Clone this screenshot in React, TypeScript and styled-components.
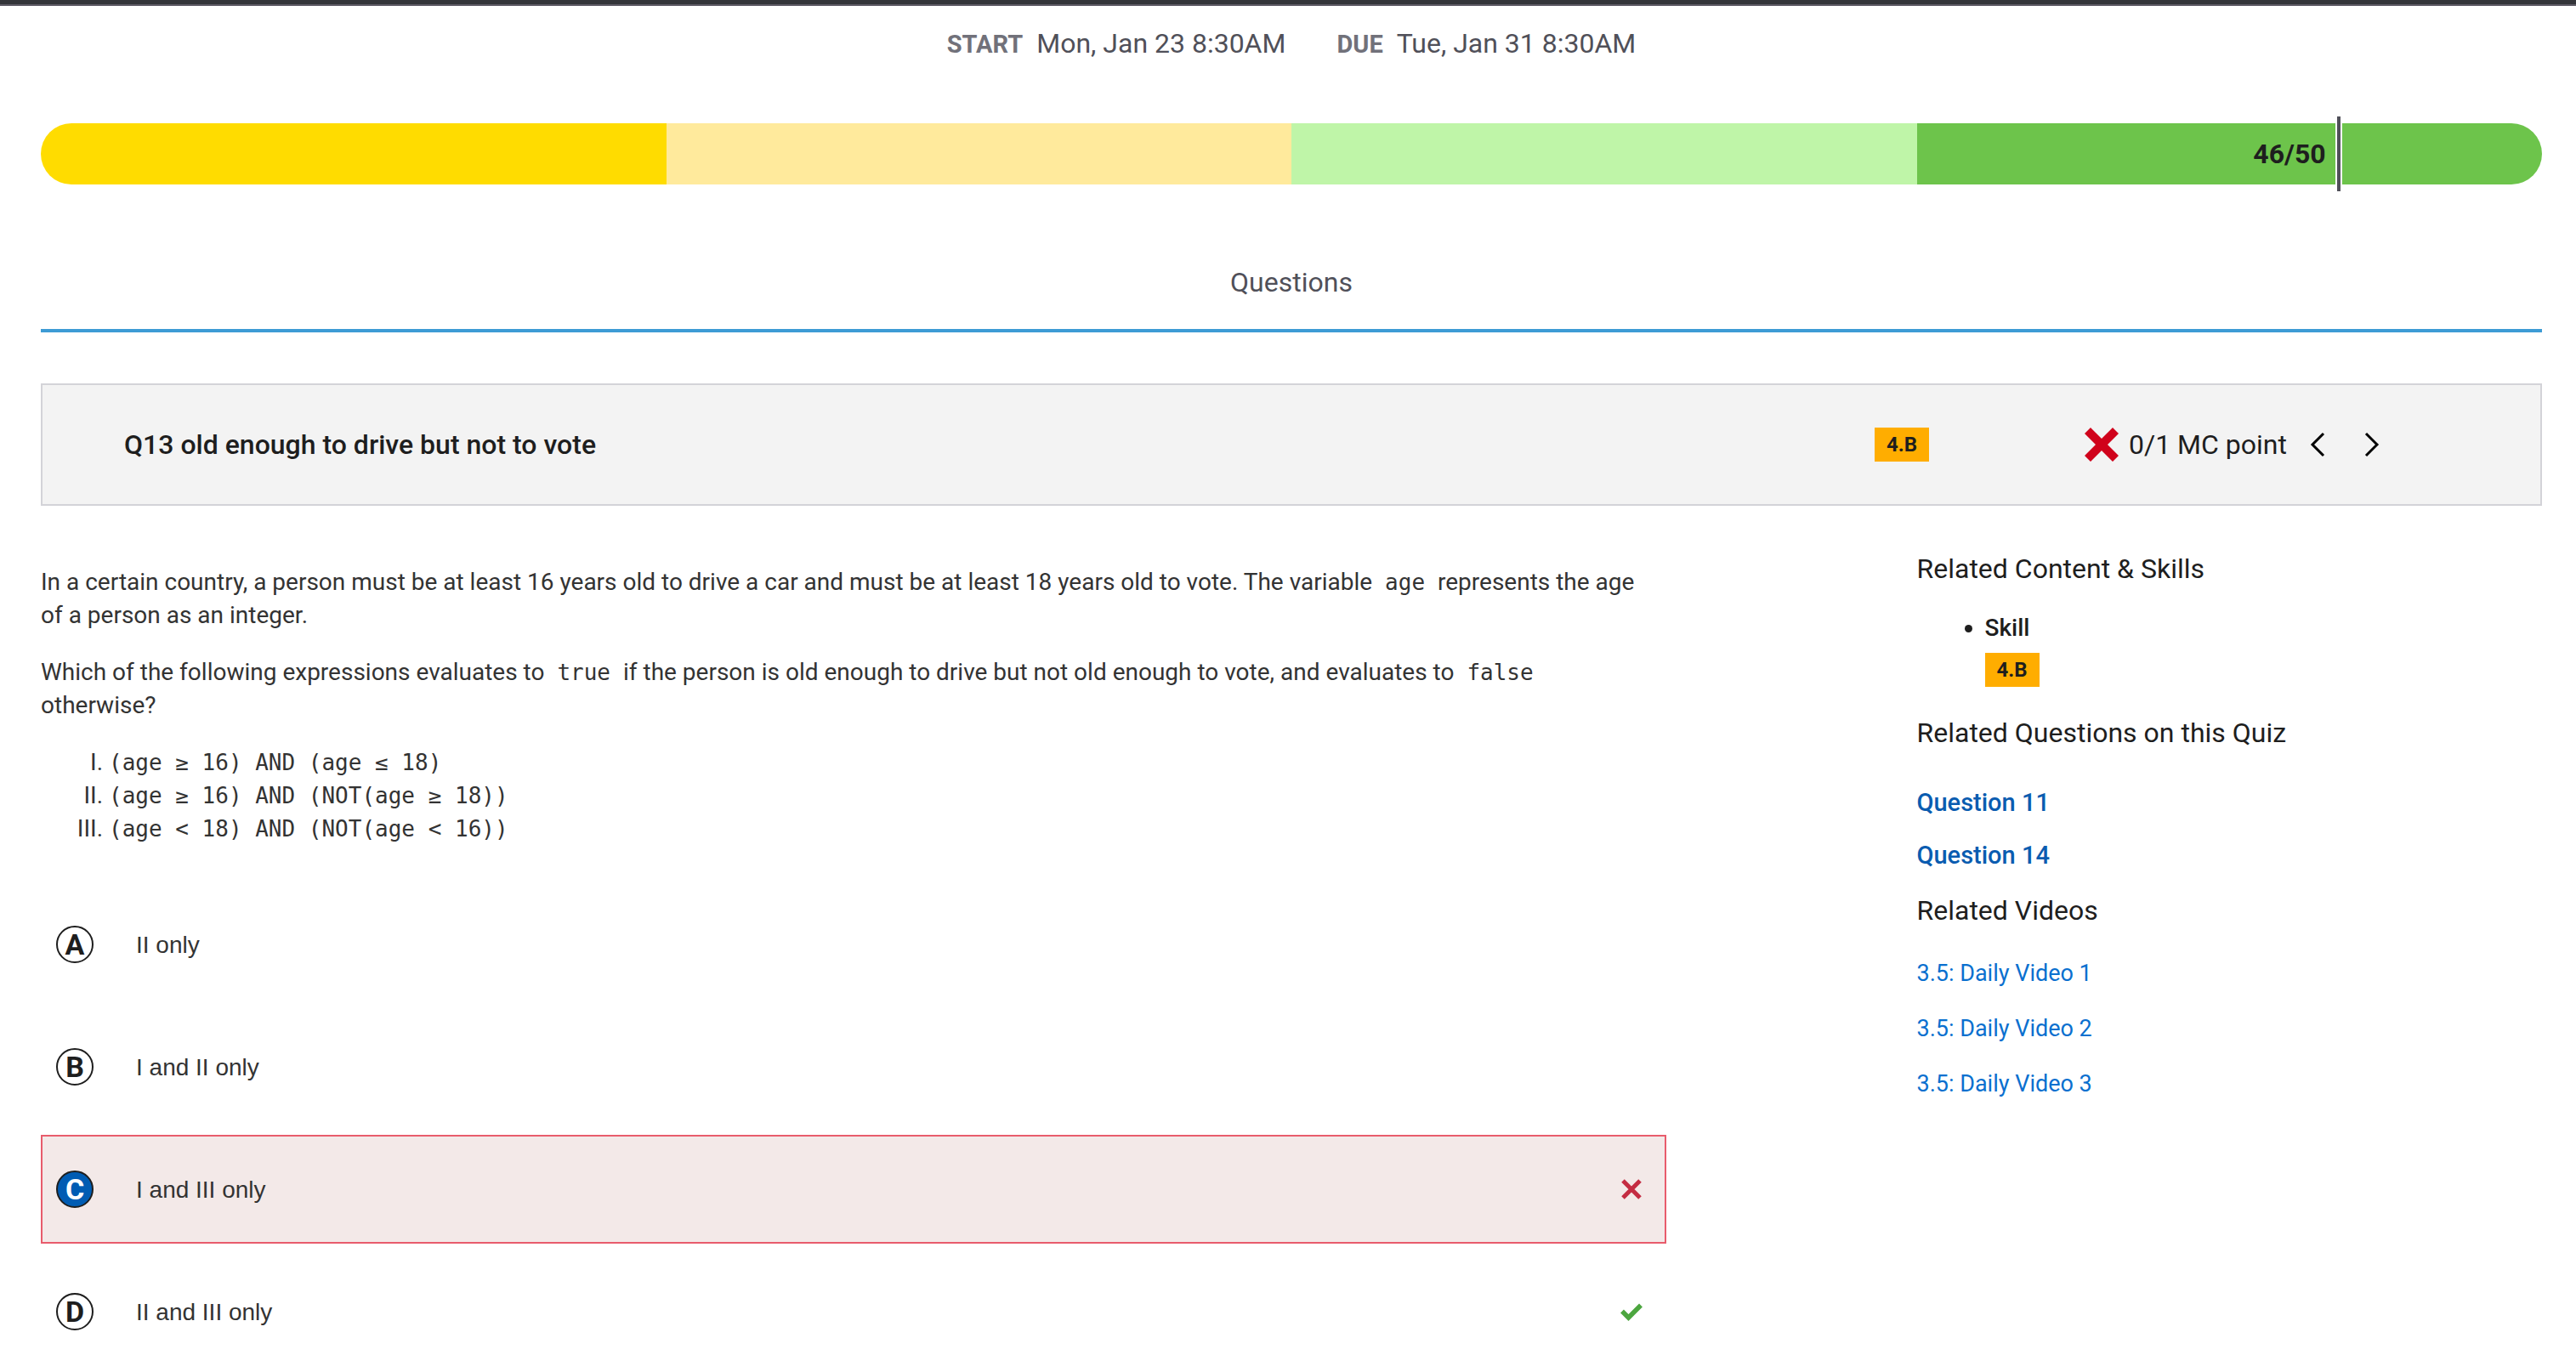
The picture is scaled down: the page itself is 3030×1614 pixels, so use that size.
import React from 'react';
import styled, { createGlobalStyle } from 'styled-components';

const GlobalStyle = createGlobalStyle`
  *, *::before, *::after { box-sizing: border-box; }
  body {
    margin: 0;
    background: #fff;
    color: #1e1e1e;
    font-family: Roboto, "Liberation Sans", sans-serif;
    font-size: 28px;
    line-height: 39px;
  }
`;

const TopStrip = styled.div`
  height: 7px;
  background: #34353a;
  border-bottom: 2px solid #5f5b66;
`;

const Page = styled.main`
  padding: 0 40px 0 48px;
`;

const Dates = styled.dl`
  display: flex;
  justify-content: center;
  gap: 60px;
  margin: 0;
  padding: 24px 0 0;
  font-size: 32px;
  line-height: 40px;
  color: #505059;
`;

const DateItem = styled.div`
  display: flex;
  align-items: baseline;
  gap: 16px;
`;

const DateLabel = styled.dt`
  font-size: 29px;
  font-weight: 700;
  color: #71717a;
`;

const DateValue = styled.dd`
  margin: 0;
`;

const ScoreBar = styled.div`
  position: relative;
  display: flex;
  height: 72px;
  margin-top: 73px;
`;

const Band = styled.div<{ $color: string }>`
  flex: 1;
  background: ${(p) => p.$color};
  &:first-child { border-radius: 36px 0 0 36px; }
  &:nth-child(4) { border-radius: 0 36px 36px 0; }
`;

const ScoreMarker = styled.div`
  position: absolute;
  top: -8px;
  bottom: -8px;
  left: 0;
  display: flex;
  align-items: center;
  justify-content: flex-end;
  gap: 11px;
  font-size: 32px;
  font-weight: 700;
`;

const MarkerLine = styled.span`
  width: 8px;
  height: 100%;
  background: #505059;
  border: solid #fff;
  border-width: 0 2px;
`;

const Tab = styled.h2`
  margin: 95px 0 0;
  padding-bottom: 35px;
  border-bottom: 4px solid #3d9bd5;
  color: #505059;
  font-size: 32px;
  font-weight: 400;
  line-height: 40px;
  text-align: center;
`;

const QuestionHeader = styled.header`
  display: grid;
  grid-template-columns: minmax(0, 1fr) 247px 536px;
  align-items: center;
  height: 144px;
  margin-top: 60px;
  padding-left: 96px;
  background: #f3f3f3;
  border: 2px solid #d3d3d8;
`;

const QuestionTitle = styled.h1`
  margin: 0;
  font-size: 32px;
  font-weight: 500;
  line-height: 40px;
`;

const Badge = styled.span`
  display: block;
  width: 64px;
  background: #ffad00;
  font-size: 24px;
  font-weight: 700;
  line-height: 40px;
  text-align: center;
`;

const Points = styled.div`
  display: flex;
  align-items: center;
  font-size: 32px;
  line-height: 40px;
`;

const PointsText = styled.span`
  margin: 0 12px;
`;

const NavButton = styled.button`
  display: flex;
  align-items: center;
  justify-content: center;
  width: 48px;
  height: 48px;
  margin-right: 16px;
  padding: 0;
  border: 0;
  background: none;
  color: #000;
`;

const Columns = styled.div`
  display: grid;
  grid-template-columns: 65fr 10fr 25fr;
`;

const QuestionBody = styled.section`
  color: #333;
`;

const Stimulus = styled.div`
  padding: 70px 32px 0 0;
`;

const Paragraph = styled.p`
  margin: 0 0 28px;
`;

const Code = styled.code`
  font-family: "DejaVu Sans Mono", "Liberation Mono", monospace;
  font-size: 26px;
  line-height: 26px;
`;

const InlineCode = styled(Code)`
  padding: 0 8px;
`;

const Statements = styled.ol`
  margin: 0;
  padding-left: 80px;
  list-style: upper-roman;
`;

const Choices = styled.ul`
  display: grid;
  gap: 16px;
  margin: 0;
  padding: 53px 0 0;
  list-style: none;
`;

const Choice = styled.li<{ $wrong?: boolean }>`
  display: flex;
  align-items: center;
  height: 128px;
  padding: 0 26px 0 16px;
  border: 2px solid ${(p) => (p.$wrong ? '#e85c6c' : 'transparent')};
  background: ${(p) => (p.$wrong ? '#f3e9e8' : 'transparent')};
`;

const Letter = styled.span<{ $selected?: boolean }>`
  width: 44px;
  height: 44px;
  border: 2px solid #1e1e1e;
  border-radius: 50%;
  background: ${(p) => (p.$selected ? '#005cb3' : '#fff')};
  color: ${(p) => (p.$selected ? '#fff' : '#1e1e1e')};
  font-size: 34px;
  font-weight: 700;
  line-height: 40px;
  text-align: center;
`;

const ChoiceText = styled.span`
  flex: 1;
  margin-left: 50px;
  font-family: "Liberation Sans", Arial, sans-serif;
`;

const Related = styled.aside`
  grid-column: 3;
  padding-top: 54px;
`;

const RelatedHeading = styled.h3`
  margin: 0;
  font-size: 32px;
  font-weight: 400;
  line-height: 40px;
`;

const SkillList = styled.ul`
  margin: 0;
  padding: 30px 0 34px 80px;
`;

const Skill = styled.li`
  font-weight: 500;
  & > ${Badge} { margin-top: 10px; }
`;

const LinkList = styled.ul<{ $gap: number }>`
  display: grid;
  justify-items: start;
  gap: ${(p) => p.$gap}px;
  margin: 0;
  padding: 0;
  list-style: none;
`;

const QuestionLinks = styled(LinkList)`
  padding: 43px 0 25px;
`;

const VideoLinks = styled(LinkList)`
  padding-top: 34px;
`;

const QuestionLink = styled.a`
  color: #0a5cb0;
  font-size: 29px;
  font-weight: 500;
  text-decoration: none;
`;

const VideoLink = styled.a`
  color: #0a70cf;
  font-size: 27px;
  text-decoration: none;
`;

const BigCross = () => (
  <svg width="40" height="40" viewBox="0 0 40 40" aria-hidden="true">
    <path d="M7 0 20 13 33 0 40 7 27 20 40 33 33 40 20 27 7 40 0 33 13 20 0 7Z" fill="#d0021b" />
  </svg>
);

const Chevron = ({ left }: { left?: boolean }) => (
  <svg width="20" height="32" viewBox="0 0 20 32" fill="none" stroke="currentColor" strokeWidth="3" aria-hidden="true">
    <path d={left ? 'M17 3 4 16 17 29' : 'M3 3 16 16 3 29'} />
  </svg>
);

const WrongMark = () => (
  <svg width="26" height="26" viewBox="0 0 26 26" role="img" aria-label="Incorrect">
    <path d="M3 3 23 23M23 3 3 23" stroke="#c42c42" strokeWidth="5" fill="none" />
  </svg>
);

const RightMark = () => (
  <svg width="26" height="26" viewBox="0 0 26 26" role="img" aria-label="Correct">
    <path d="M2 12.5 9.5 20 24 5.5" stroke="#4ca63f" strokeWidth="5.5" fill="none" />
  </svg>
);

const bands = ['#ffdc00', '#ffea9c', '#bff5a8', '#6dc44b'];
const score = 46;
const total = 50;

const choices = [
  { letter: 'A', text: 'II only' },
  { letter: 'B', text: 'I and II only' },
  { letter: 'C', text: 'I and III only', selected: true, wrong: true },
  { letter: 'D', text: 'II and III only', correct: true },
];

const statements = ['(age ≥ 16) AND (age ≤ 18)', '(age ≥ 16) AND (NOT(age ≥ 18))', '(age < 18) AND (NOT(age < 16))'];

export default function App() {
  return (
    <>
      <GlobalStyle />
      <TopStrip />
      <Page>
        <Dates>
          <DateItem>
            <DateLabel>START</DateLabel>
            <DateValue>Mon, Jan 23 8:30AM</DateValue>
          </DateItem>
          <DateItem>
            <DateLabel>DUE</DateLabel>
            <DateValue>Tue, Jan 31 8:30AM</DateValue>
          </DateItem>
        </Dates>
        <ScoreBar>
          {bands.map((color) => (
            <Band key={color} $color={color} />
          ))}
          <ScoreMarker style={{ width: `${(score / total) * 100}%` }}>
            {score}/{total}
            <MarkerLine />
          </ScoreMarker>
        </ScoreBar>
        <Tab>Questions</Tab>
        <QuestionHeader>
          <QuestionTitle>Q13 old enough to drive but not to vote</QuestionTitle>
          <Badge>4.B</Badge>
          <Points>
            <BigCross />
            <PointsText>0/1 MC point</PointsText>
            <NavButton type="button" aria-label="Previous question">
              <Chevron left />
            </NavButton>
            <NavButton type="button" aria-label="Next question">
              <Chevron />
            </NavButton>
          </Points>
        </QuestionHeader>
        <Columns>
          <QuestionBody>
            <Stimulus>
              <Paragraph>
                In a certain country, a person must be at least 16 years old to drive a car and must be at least 18
                years old to vote. The variable <InlineCode>age</InlineCode> represents the age of a person as an
                integer.
              </Paragraph>
              <Paragraph>
                Which of the following expressions evaluates to <InlineCode>true</InlineCode> if the person is old
                enough to drive but not old enough to vote, and evaluates to <InlineCode>false</InlineCode> otherwise?
              </Paragraph>
              <Statements>
                {statements.map((s) => (
                  <li key={s}>
                    <Code>{s}</Code>
                  </li>
                ))}
              </Statements>
            </Stimulus>
            <Choices>
              {choices.map((c) => (
                <Choice key={c.letter} $wrong={c.wrong}>
                  <Letter $selected={c.selected}>{c.letter}</Letter>
                  <ChoiceText>{c.text}</ChoiceText>
                  {c.wrong && <WrongMark />}
                  {c.correct && <RightMark />}
                </Choice>
              ))}
            </Choices>
          </QuestionBody>
          <Related>
            <RelatedHeading>Related Content &amp; Skills</RelatedHeading>
            <SkillList>
              <Skill>
                Skill
                <Badge>4.B</Badge>
              </Skill>
            </SkillList>
            <RelatedHeading>Related Questions on this Quiz</RelatedHeading>
            <QuestionLinks $gap={23}>
              <li><QuestionLink href="#question-11">Question 11</QuestionLink></li>
              <li><QuestionLink href="#question-14">Question 14</QuestionLink></li>
            </QuestionLinks>
            <RelatedHeading>Related Videos</RelatedHeading>
            <VideoLinks $gap={25}>
              <li><VideoLink href="#video-1">3.5: Daily Video 1</VideoLink></li>
              <li><VideoLink href="#video-2">3.5: Daily Video 2</VideoLink></li>
              <li><VideoLink href="#video-3">3.5: Daily Video 3</VideoLink></li>
            </VideoLinks>
          </Related>
        </Columns>
      </Page>
    </>
  );
}
